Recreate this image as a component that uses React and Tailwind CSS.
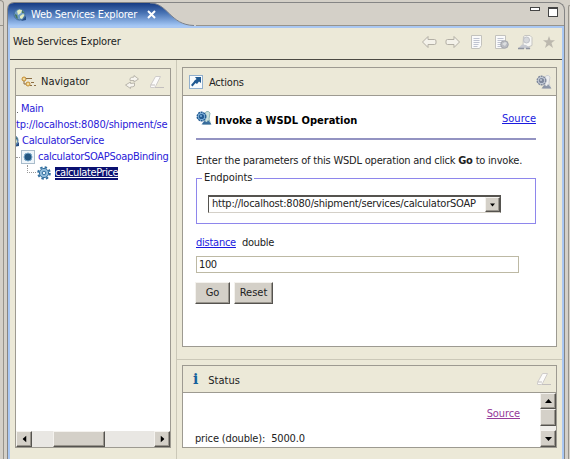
import React from 'react';

const Arrow = ({ flip }) => (
  <svg width="16" height="14" viewBox="0 0 16 14" className={flip ? '-scale-x-100' : ''}>
    <path d="M1.500 7 7 1.500V4.500H13.500Q15 4.500 15 6V8Q15 9.500 13.500 9.500H7v3z" fill="#f4f2ea" stroke="#b3afa5" />
  </svg>
);

const Page = ({ globe }) => (
  <svg width="16" height="16" viewBox="0 0 16 16">
    <path d="M2.500 1.500h10v10l-2 3h-8z" fill="#fafafa" stroke="#c3c2bd" />
    <path d="M4.500 4.500h6M4.500 6.500h6M4.500 8.500h6M4.500 10.500h5M4.500 12.500h4" stroke="#bfc3d0" />
    {globe && <circle cx="11.500" cy="10.500" r="3.800" fill="#b9bbc1" stroke="#a3a5ab" />}
    {globe && <path d="M9 10l3-2 2 1-2 3z" fill="#dddee0" />}
  </svg>
);

const Person = () => (
  <svg width="17" height="16" viewBox="0 0 17 16">
    <path d="M6.500 2.500 8 1.500h5l2 2v8l-4 1.500-5-2z" fill="#f6f6f4" stroke="#c6c5c1" />
    <circle cx="9.500" cy="6" r="3" fill="#d6d8dc" stroke="#bfc1c7" />
    <path d="M1 14.500 5 10.500l4 .5 5 3.500z" fill="#c6c9d0" />
    <path d="M1 14.500h6M9 14.500h4" stroke="#9095a0" strokeWidth="1.600" />
  </svg>
);

const GearPerson = ({ muted }) => {
  const a = muted ? '#7f899d' : '#235c94';
  const b = muted ? '#c3cad6' : '#7eb0d8';
  return (
    <svg width="16" height="16" viewBox="0 0 16 16" className="shrink-0">
      <path d="M9 12V3.500Q10 .5 12.500 1.500 15 2.500 13.500 6L13 9l1.500 5H7z" fill={muted ? '#eceded' : '#c9e0dc'} stroke={muted ? '#cccfd3' : '#8db5b5'} />
      <path d="M5.500 14.500 8 11l3 1 1-2 3.500 4.500z" fill={a} opacity=".85" />
      <circle cx="5.500" cy="6.500" r="4.300" fill={b} stroke={a} strokeWidth="1.400" strokeDasharray="2 .7" />
      <circle cx="5.500" cy="6.500" r="2.600" fill={a} />
      <circle cx="5" cy="6" r="1" fill={b} />
    </svg>
  );
};

const Eraser = () => (
  <svg width="16" height="16" viewBox="0 0 16 16">
    <path d="M1.500 11.500 6.500 2.500h5l-4.500 9-1.500 2h-4z" fill="#fcfbfa" stroke="#cfccca" />
    <path d="M1.500 11h4.500M6 13.500h9" fill="none" stroke="#c3bfbe" />
  </svg>
);

const Globe = ({ className = '' }) => (
  <svg width="14" height="14" viewBox="0 0 14 14" className={`shrink-0 ${className}`}>
    <circle cx="6.500" cy="6.500" r="5.500" fill="#6f9cc4" stroke="#3f6a99" />
    <path d="M4 3 6 1.500 9 2 8 5 5 7zM7 8l3-2 1.500 1L9 11 7 10z" fill="#e3ecc0" />
    <path d="M2 6l2 1 1 4Q2 10 2 6zM9 2l2.500 3L9 5z" fill="#48775c" />
    <path d="M8 13l5-1V8z" fill="#274f86" />
  </svg>
);

const Button3D = ({ className = '', children }) => (
  <div className={`flex shrink-0 items-center justify-center border border-t-[#f4f2ee] border-l-[#f4f2ee] border-r-[#55534f] border-b-[#55534f] bg-[#d4d0c8] shadow-[inset_-1px_-1px_0_#99958d] ${className}`}>
    {children}
  </div>
);

const Tri = ({ className = '' }) => (
  <svg width="7" height="4" viewBox="0 0 7 4" className={className}><path d="M0 0h7L3.500 4z" fill="#000" /></svg>
);

export default function App() {
  return (
    <div className="flex h-[459px] w-[570px] overflow-hidden bg-[#d4d0c8] font-['DejaVu_Sans_Condensed','DejaVu_Sans',sans-serif] text-[11px] leading-[14px] whitespace-nowrap text-[#222]">
      <div className="flex w-[7px] shrink-0 flex-col">
        <div className="h-[25px] w-[4px] rounded-tr border-t border-r border-[#96938c]" />
        <div className="h-px w-[4px] bg-[#96938c]" />
        <div className="w-[4px] flex-1 border-r border-[#96938c]" />
      </div>

      <div className="mt-[2px] flex w-[558px] shrink-0 flex-col rounded-tl-[7px] rounded-tr-[8px] border-x border-t border-[#858585]">
        <div className="flex h-[23px] shrink-0 justify-between">
          <div className="relative flex w-[188px] items-center">
            <svg width="188" height="23" viewBox="0 0 188 23" className="absolute top-0 left-0">
              <defs>
                <linearGradient id="tab" x1="0" y1="0" x2="0" y2="1">
                  <stop offset="0" stopColor="#163b83" />
                  <stop offset=".45" stopColor="#4a75b5" />
                  <stop offset="1" stopColor="#a5c8f6" />
                </linearGradient>
              </defs>
              <path d="M0 23V6Q0 0 6 0H142C160 0 162 22 186 23z" fill="url(#tab)" />
              <path d="M142 0C160 0 162 22 186 22.500" fill="none" stroke="#79808c" />
            </svg>
            <Globe className="relative ml-[5px]" />
            <span className="relative ml-[4px] tracking-[-0.22px] text-white">Web Services Explorer</span>
            <svg width="9" height="9" viewBox="0 0 9 9" className="relative ml-[10px]"><path d="M1 1l7 7M8 1 1 8" stroke="#fff" strokeWidth="2" /></svg>
          </div>
          <div className="flex flex-1 justify-end gap-[8px] border-b border-[#96938c] pt-[4px] pr-[6px]">
            <div className="h-[4px] w-[10px] border border-[#444] bg-white" />
            <div className="h-[10px] w-[10px] border border-t-2 border-[#444] bg-white" />
          </div>
        </div>

        <div className="flex min-h-0 flex-1 flex-col border-x-2 border-t-2 border-[#a9c7f2] bg-[#ece9d8]">
          <div className="flex h-[32px] shrink-0 items-center justify-between border-b border-[#4b4942] pr-[6px] pb-[3px] pl-[3px]">
            <span className="tracking-[-0.15px]">Web Services Explorer</span>
            <div className="flex items-center gap-[8px]">
              <Arrow />
              <Arrow flip />
              <Page />
              <Page globe />
              <Person />
              <svg width="14" height="14" viewBox="0 0 14 14"><path d="M7 1 8.500 5.200H13L9.500 8l1.500 5L7 10l-4 3 1.500-5L1 5.200h4.500z" fill="#bcb8ae" /></svg>
            </div>
          </div>

          <div className="flex min-h-0 flex-1">
            <div className="flex w-[167px] shrink-0 border-r border-[#cbc8b8] pt-[8px] pl-[5px]">
              <div className="flex h-[380px] w-[156px] flex-col border border-[#9d9a91] bg-white">
                <div className="flex h-[27px] shrink-0 items-center border-b border-[#9d9a91] bg-[#ece9d8] pl-[5px]">
                  <svg width="16" height="14" viewBox="0 0 16 14" className="shrink-0">
                    <circle cx="3" cy="4" r="2" fill="#f3dda0" stroke="#c38a2d" />
                    <circle cx="7" cy="9" r="2" fill="#f3dda0" stroke="#c38a2d" />
                    <path d="M3 6v3h2M5 3.500h6M10 7.500h3M9 10.500h2M13 10.500h2" fill="none" stroke="#8d6f45" />
                  </svg>
                  <span className="ml-[4px]">Navigator</span>
                  <svg width="16" height="16" viewBox="0 0 16 16" className="ml-[35px] shrink-0">
                    <path d="M6 6.500V4.500Q7 3 10 3V1.500L14.500 5 10 8V6.500z" fill="#f6f4ee" stroke="#b9b6ac" />
                    <path d="M10.500 9v3Q9 13 6.500 13v1.500L1.500 11 6.500 8v1.500z" fill="#f6f4ee" stroke="#b9b6ac" />
                  </svg>
                  <span className="ml-[9px] shrink-0"><Eraser /></span>
                </div>
                <div className="flex-1 pt-[5px] text-[#2a20d8]">
                  <div className="flex h-[16px] items-center"><span className="mr-[3px] mb-[4px] ml-px h-px w-px self-end bg-[#666]" /><span className="tracking-[-0.3px]">Main</span></div>
                  <div className="h-[16px] leading-[16px] tracking-[-0.19px]">tp://localhost:8080/shipment/se</div>
                  <div className="flex h-[16px] items-center">
                    <div className="flex w-[4px] shrink-0 justify-end overflow-hidden"><Globe /></div>
                    <span className="ml-[2px] tracking-[-0.28px]">CalculatorService</span>
                  </div>
                  <div className="flex h-[16px] items-center">
                    <span className="w-[4px] shrink-0 border-t border-dotted border-[#999]" />
                    <svg width="16" height="16" viewBox="0 0 16 16" className="shrink-0">
                      <rect x="1.500" y="1.500" width="13" height="13" fill="#eef5fa" stroke="#a9bccb" />
                      <circle cx="8" cy="8" r="4" fill="#235782" stroke="#7ba9cc" />
                    </svg>
                    <span className="ml-[2px] tracking-[-0.28px]">calculatorSOAPSoapBinding</span>
                  </div>
                  <div className="flex h-[16px] items-center">
                    <span className="mb-[8px] ml-[11px] h-[8px] w-[9px] shrink-0 border-b border-l border-dotted border-[#999]" />
                    <svg width="16" height="16" viewBox="0 0 16 16" className="shrink-0">
                      <circle cx="8" cy="8" r="5.800" fill="none" stroke="#326f9f" strokeWidth="2" strokeDasharray="2.400 2.150" />
                      <circle cx="8" cy="8" r="4.600" fill="#94bfdd" stroke="#326f9f" />
                      <circle cx="8" cy="8" r="1.800" fill="#e8f3fa" stroke="#326f9f" />
                    </svg>
                    <span className="ml-[3px] h-[13px] bg-[#0a1070] leading-[12px] tracking-[-0.4px] text-white underline">calculatePrice</span>
                  </div>
                </div>
                <div className="flex h-[16px] shrink-0 bg-[#e9e7e3]">
                  <Button3D className="w-[16px]"><Tri className="rotate-90" /></Button3D>
                  <Button3D className="ml-[21px] w-[52px]" />
                  <Button3D className="ml-auto w-[16px]"><Tri className="-rotate-90" /></Button3D>
                </div>
              </div>
            </div>

            <div className="flex min-w-0 flex-1 flex-col">
              <div className="h-[300px] shrink-0 border-b border-[#cbc8b8] pt-[7px] pl-[5px]">
                <div className="flex h-[280px] w-[375px] flex-col border border-[#9d9a91] bg-white">
                  <div className="flex h-[28px] shrink-0 items-center border-b border-[#9d9a91] bg-[#ece9d8] pr-[4px] pl-[6px]">
                    <svg width="14" height="14" viewBox="0 0 14 14">
                      <rect x=".5" y=".5" width="13" height="13" fill="#f8fbfd" stroke="#91afcd" />
                      <path d="M6 2h6v6L10 6.500 8 9 6.500 8 3.500 11.500 2 10l3-3.500L5 6l2.500-2z" fill="#205991" />
                    </svg>
                    <span className="mt-[2px] ml-[6px] tracking-[-0.2px]">Actions</span>
                    <span className="ml-auto"><GearPerson muted /></span>
                  </div>
                  <div className="pl-[13px]">
                    <div className="mt-[12px] flex h-[20px] w-[340px] items-center">
                      <GearPerson />
                      <span className="mt-[6px] ml-[3px] font-bold text-black">Invoke a WSDL Operation</span>
                      <span className="mt-[1px] ml-auto text-[#1a1ae0] underline">Source</span>
                    </div>
                    <div className="mt-[10px] h-[2px] w-[340px] bg-[#9393c2]" />
                    <div className="mt-[14px] tracking-[-0.21px]">Enter the parameters of this WSDL operation and click <b>Go</b> to invoke.</div>
                    <fieldset className="mt-[3px] h-[53px] w-[340px] border border-[#8e86ec] pl-[11px]">
                      <legend className="-ml-[6px] h-[14px] px-[2px] tracking-[-0.1px]">Endpoints</legend>
                      <div className="mt-[10px] flex h-[18px] w-[293px] border border-t-2 border-[#55534f] border-b-[#d4d0c8] bg-white">
                        <span className="pl-[3px] tracking-[-0.22px]">http://localhost:8080/shipment/services/calculatorSOAP</span>
                        <Button3D className="ml-auto w-[15px]"><Tri className="w-[5px]" /></Button3D>
                      </div>
                    </fieldset>
                    <div className="mt-[12px]"><span className="tracking-[-0.25px] text-[#1a1ae0] underline">distance</span><span className="ml-[6px] tracking-[-0.25px]">double</span></div>
                    <div className="mt-[6px] h-[17px] w-[323px] border border-[#bdb9a4] pl-[2px] leading-[16px] tracking-[-0.4px]">100</div>
                    <div className="mt-[9px] flex gap-[4px]">
                      <Button3D className="-ml-px h-[22px] w-[35px]">Go</Button3D>
                      <Button3D className="h-[22px] w-[39px]">Reset</Button3D>
                    </div>
                  </div>
                </div>
              </div>
              <div className="pt-[5px] pl-[5px]">
                <div className="flex h-[83px] w-[375px] flex-col border border-[#9d9a91] bg-white">
                  <div className="flex h-[27px] shrink-0 items-center border-b border-[#9d9a91] bg-[#ece9d8] pr-[4px] pl-[10px]">
                    <span className="font-['DejaVu_Serif',serif] text-[14px] font-bold text-[#17629c]">i</span>
                    <span className="mt-[4px] ml-[10px]">Status</span>
                    <span className="ml-auto"><Eraser /></span>
                  </div>
                  <div className="flex min-h-0 flex-1">
                    <div className="flex flex-1 flex-col pl-[12px]">
                      <div className="mt-[14px] mr-[20px] text-right tracking-[-0.1px] text-[#963a9a]"><span className="underline">Source</span></div>
                      <div className="mt-[11px] tracking-[-0.16px]">price (double):&nbsp; 5000.0</div>
                    </div>
                    <div className="flex w-[16px] flex-col bg-[#f0eeea]">
                      <Button3D className="h-[16px]"><Tri className="rotate-180" /></Button3D>
                      <Button3D className="h-[17px]" />
                      <Button3D className="mt-auto h-[17px]"><Tri /></Button3D>
                    </div>
                  </div>
                </div>
              </div>
            </div>
          </div>
        </div>
      </div>

      <div className="mt-[5px] ml-[3px] flex-1 rounded-tl border-t border-l border-[#96938c]" />
    </div>
  );
}
